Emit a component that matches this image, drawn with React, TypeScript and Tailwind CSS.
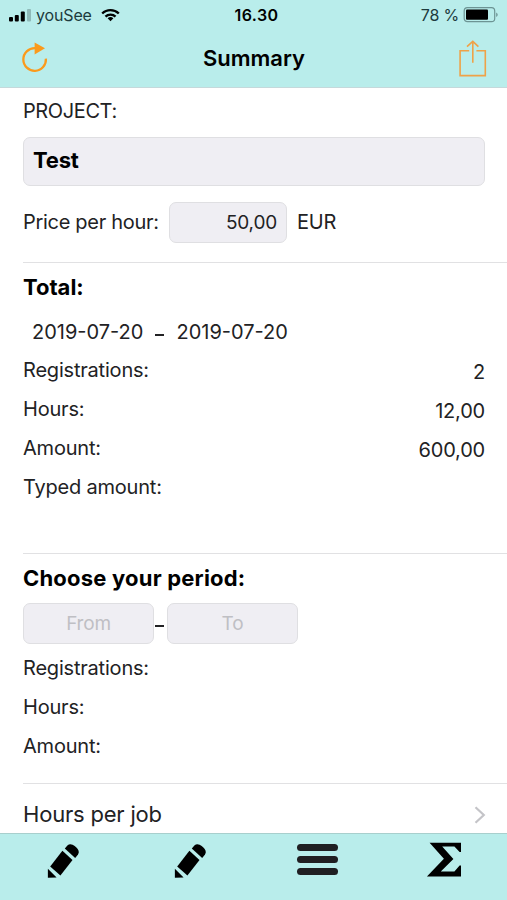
import type { ReactNode } from "react";

const TOTALS = [
  { label: "Registrations:", value: "2" },
  { label: "Hours:", value: "12,00" },
  { label: "Amount:", value: "600,00" },
  { label: "Typed amount:", value: "" },
];

const PERIOD = ["Registrations:", "Hours:", "Amount:"];

function StatusBar() {
  return (
    <div className="grid h-[30px] grid-cols-3 items-center px-2 text-base leading-[30px] text-[#1d3b3d]">
      <div className="flex items-center">
        <svg width="24" height="14" viewBox="0 0 24 14" className="mr-1 shrink-0">
          <rect x="1" y="9" width="4" height="4.5" rx="1" fill="#000" />
          <rect x="6.8" y="7" width="4" height="6.5" rx="1" fill="#000" />
          <rect x="12.8" y="3.5" width="4" height="10" rx="1" fill="#000" />
          <rect x="19" y="1" width="4" height="12.5" rx="1" fill="#8fb9b8" />
        </svg>
        <span className="tracking-[-0.15px]">youSee</span>
        <svg width="19" height="14" viewBox="0 0 20 15" className="ml-[9px] shrink-0">
          <g fill="none" stroke="#000" strokeWidth="2.5">
            <path d="M1.1 5.9a12.6 12.6 0 0 1 17.8 0" />
            <path d="M4.6 9.3a7.6 7.6 0 0 1 10.8 0" />
          </g>
          <path d="M10 14.2 6.9 11.1a4.4 4.4 0 0 1 6.2 0z" fill="#000" />
        </svg>
      </div>
      <div className="text-center font-semibold tracking-[0.4px] text-black">
        <span className="ml-1.5">16.30</span>
      </div>
      <div className="flex items-center justify-end">
        <span className="tracking-[-0.2px]">78 %</span>
        <svg width="36" height="16" viewBox="0 0 36 16" className="ml-1 shrink-0">
          <rect x="1.2" y="0.7" width="30.5" height="14" rx="3.2" fill="none" stroke="#6d9494" strokeWidth="1.2" />
          <rect x="3" y="2.6" width="22" height="10.2" rx="1" fill="#000" />
          <path d="M33.2 5.6c2 .8 2 3.6 0 4.4z" fill="#6d9494" />
        </svg>
      </div>
    </div>
  );
}

function NavBar() {
  return (
    <div className="flex h-[57px] items-center justify-between pl-[21px] pr-5">
      <svg width="28" height="31" viewBox="0 0 28 31" className="mb-0.5" aria-label="Refresh">
        <path d="M14 6.2A11.3 11.3 0 1 0 24.9 16.6" fill="none" stroke="#fb9a1c" strokeWidth="2.3" />
        <path d="M13.6.6v11.8l10.4-6.2z" fill="#fb9a1c" />
      </svg>
      <h1 className="text-[22px] font-semibold text-black">Summary</h1>
      <svg width="28" height="38" viewBox="0 0 28 38" fill="none" stroke="#efa248" strokeWidth="1.6" aria-label="Share">
        <path d="M10.2 10.8H1.1v24.8h25.2V10.8h-8.9" />
        <path d="M13.8 22.8V1.8M8 6.6 13.8 1.3l5.6 5.3" />
      </svg>
    </div>
  );
}

function Field({ className, children }: { className: string; children: ReactNode }) {
  return (
    <div className={`flex items-center rounded-[7px] border border-[#dfdfe2] bg-[#efeef3] ${className}`}>
      {children}
    </div>
  );
}

function Pencil() {
  return (
    <svg width="34" height="36" viewBox="0 0 34 36" fill="#000">
      <path d="M1.9 34.7V25.8L10.6 34.5z" />
      <path d="M4.2 23.6 16.4 7.8 26.5 17 14.4 32.4z" />
      <path d="M18.8 5.4 21.4 2.4Q23.6.4 26.6 1.7 31.2 4 32.6 7.8 33.2 9.8 32 11.6L29.2 14.9z" />
    </svg>
  );
}

function TabBar() {
  return (
    <nav className="grid h-[67px] shrink-0 grid-cols-4 border-t border-[#a8cfcd] bg-[#b9edeb]">
      <div className="flex justify-center pt-[9px]">
        <Pencil />
      </div>
      <div className="flex justify-center pt-[9px]">
        <Pencil />
      </div>
      <div className="flex flex-col items-center gap-[5px] pl-px pt-[10px]">
        <span className="h-[7px] w-[41px] rounded-full bg-[#1f1f22]" />
        <span className="h-[7px] w-[41px] rounded-full bg-[#1f1f22]" />
        <span className="h-[7px] w-[41px] rounded-full bg-[#1f1f22]" />
      </div>
      <div className="flex justify-center pt-2">
        <svg width="36" height="36" viewBox="0 0 36 36" fill="#000">
          <path d="M3.6.7H35V9.9H33.6L28.4 4.4H16.2L27.4 17 14.8 29.6H28.4L33.6 23.4H35V34.6H.9L17.9 16.8z" />
        </svg>
      </div>
    </nav>
  );
}

export default function App() {
  return (
    <div className="flex h-[900px] w-[507px] flex-col overflow-hidden bg-white font-['Inter',sans-serif] text-[20px] text-[#222224]">
      <header className="h-[88px] shrink-0 border-b border-[#c5d9db] bg-[#b9edeb]">
        <StatusBar />
        <NavBar />
      </header>

      <main className="flex min-h-0 flex-1 flex-col pl-[23px]">
        <section className="h-[174px] shrink-0 pr-[22px]">
          <p className="pt-2 leading-[30px] tracking-[-0.4px]">PROJECT:</p>
          <Field className="mt-[11px] h-[49px] px-[9px] pb-0.5 text-[22px] font-bold tracking-[-0.2px] text-black">
            Test
          </Field>
          <div className="mt-4 flex items-center">
            <span className="w-[146px] pb-0.5 tracking-[-0.3px]">Price per hour:</span>
            <Field className="h-[41px] w-[118px] justify-end px-[9px] pt-px text-[19px] tracking-[-0.2px]">50,00</Field>
            <span className="ml-[10px] pb-0.5 tracking-[-0.2px]">EUR</span>
          </div>
        </section>

        <section className="h-[291px] shrink-0 border-t border-[#e1e1e3] pr-[22px]">
          <h2 className="pt-[9px] text-[22px] font-bold leading-[30px] text-black">Total:</h2>
          <div className="mt-[15px] flex h-[30px] items-center pl-[9px]">
            <span>2019-07-20</span>
            <span className="ml-[12px] mt-[5px] h-[2px] w-[9px] bg-[#222224]" />
            <span className="ml-[12px]">2019-07-20</span>
          </div>
          <dl className="mt-[3px]">
            {TOTALS.map((row) => (
              <div key={row.label} className="flex h-[39px] items-center justify-between">
                <dt className="tracking-[-0.2px]">{row.label}</dt>
                <dd className="pt-1 tracking-[-0.2px]">{row.value}</dd>
              </div>
            ))}
          </dl>
        </section>

        <section className="h-[230px] shrink-0 border-t border-[#e1e1e3]">
          <h2 className="pt-[9px] text-[22px] font-bold leading-[30px] tracking-[0.2px] text-black">
            Choose your period:
          </h2>
          <div className="mt-[10px] flex items-center text-[19px] tracking-[-0.2px] text-[#bfbfc4]">
            <Field className="h-[41px] w-[131px] justify-center pt-px">From</Field>
            <span className="ml-px mr-[3px] mt-[5px] h-[2px] w-[9px] bg-[#222224]" />
            <Field className="h-[41px] w-[131px] justify-center pt-px">To</Field>
          </div>
          <div className="mt-[5px]">
            {PERIOD.map((label) => (
              <p key={label} className="h-[39px] leading-[39px] tracking-[-0.2px]">
                {label}
              </p>
            ))}
          </div>
        </section>

        <section className="flex flex-1 items-start justify-between border-t border-[#e1e1e3] pr-[21px] pt-[15px]">
          <span className="text-[22px] leading-[30px] tracking-[-0.2px]">Hours per job</span>
          <svg width="12" height="18" viewBox="0 0 12 18" className="mt-[7px]" fill="none" stroke="#c4c4c8" strokeWidth="2.2">
            <path d="M1.5 1.2 9.8 9l-8.3 7.8" />
          </svg>
        </section>
      </main>

      <TabBar />
    </div>
  );
}
